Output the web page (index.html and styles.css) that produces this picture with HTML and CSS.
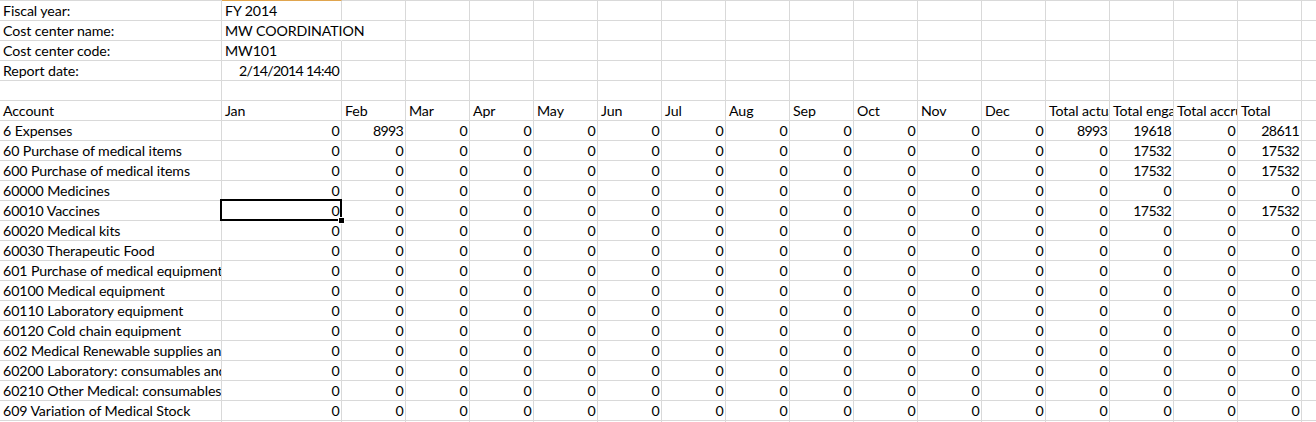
FILE: index.html
```html
<!DOCTYPE html>
<html>
<head>
<meta charset="utf-8">
<link rel="stylesheet" href="styles.css">
</head>
<body>
<div class="sheet">
  <div class="c t">Fiscal year:</div><div class="c t sc">FY 2014</div><div class="c t"></div><div class="c t"></div><div class="c t"></div><div class="c t"></div><div class="c t"></div><div class="c t"></div><div class="c t"></div><div class="c t"></div><div class="c t"></div><div class="c t"></div><div class="c t"></div><div class="c t"></div><div class="c t"></div><div class="c t"></div><div class="c t"></div><div class="c t"></div>
  <div class="c">Cost center name:</div><div class="c ov">MW COORDINATION</div><div class="c"></div><div class="c"></div><div class="c"></div><div class="c"></div><div class="c"></div><div class="c"></div><div class="c"></div><div class="c"></div><div class="c"></div><div class="c"></div><div class="c"></div><div class="c"></div><div class="c"></div><div class="c"></div><div class="c"></div><div class="c"></div>
  <div class="c">Cost center code:</div><div class="c">MW101</div><div class="c"></div><div class="c"></div><div class="c"></div><div class="c"></div><div class="c"></div><div class="c"></div><div class="c"></div><div class="c"></div><div class="c"></div><div class="c"></div><div class="c"></div><div class="c"></div><div class="c"></div><div class="c"></div><div class="c"></div><div class="c"></div>
  <div class="c">Report date:</div><div class="c n">2/14/2014 14:40</div><div class="c"></div><div class="c"></div><div class="c"></div><div class="c"></div><div class="c"></div><div class="c"></div><div class="c"></div><div class="c"></div><div class="c"></div><div class="c"></div><div class="c"></div><div class="c"></div><div class="c"></div><div class="c"></div><div class="c"></div><div class="c"></div>
  <div class="c"></div><div class="c"></div><div class="c"></div><div class="c"></div><div class="c"></div><div class="c"></div><div class="c"></div><div class="c"></div><div class="c"></div><div class="c"></div><div class="c"></div><div class="c"></div><div class="c"></div><div class="c"></div><div class="c"></div><div class="c"></div><div class="c"></div><div class="c"></div>
  <div class="c">Account</div><div class="c">Jan</div><div class="c">Feb</div><div class="c">Mar</div><div class="c">Apr</div><div class="c">May</div><div class="c">Jun</div><div class="c">Jul</div><div class="c">Aug</div><div class="c">Sep</div><div class="c">Oct</div><div class="c">Nov</div><div class="c">Dec</div><div class="c">Total actuals</div><div class="c">Total engaged</div><div class="c">Total accrued</div><div class="c">Total</div><div class="c"></div>
  <div class="c">6 Expenses</div><div class="c n">0</div><div class="c n">8993</div><div class="c n">0</div><div class="c n">0</div><div class="c n">0</div><div class="c n">0</div><div class="c n">0</div><div class="c n">0</div><div class="c n">0</div><div class="c n">0</div><div class="c n">0</div><div class="c n">0</div><div class="c n">8993</div><div class="c n">19618</div><div class="c n">0</div><div class="c n">28611</div><div class="c"></div>
  <div class="c">60 Purchase of medical items</div><div class="c n">0</div><div class="c n">0</div><div class="c n">0</div><div class="c n">0</div><div class="c n">0</div><div class="c n">0</div><div class="c n">0</div><div class="c n">0</div><div class="c n">0</div><div class="c n">0</div><div class="c n">0</div><div class="c n">0</div><div class="c n">0</div><div class="c n">17532</div><div class="c n">0</div><div class="c n">17532</div><div class="c"></div>
  <div class="c">600 Purchase of medical items</div><div class="c n">0</div><div class="c n">0</div><div class="c n">0</div><div class="c n">0</div><div class="c n">0</div><div class="c n">0</div><div class="c n">0</div><div class="c n">0</div><div class="c n">0</div><div class="c n">0</div><div class="c n">0</div><div class="c n">0</div><div class="c n">0</div><div class="c n">17532</div><div class="c n">0</div><div class="c n">17532</div><div class="c"></div>
  <div class="c">60000 Medicines</div><div class="c n">0</div><div class="c n">0</div><div class="c n">0</div><div class="c n">0</div><div class="c n">0</div><div class="c n">0</div><div class="c n">0</div><div class="c n">0</div><div class="c n">0</div><div class="c n">0</div><div class="c n">0</div><div class="c n">0</div><div class="c n">0</div><div class="c n">0</div><div class="c n">0</div><div class="c n">0</div><div class="c"></div>
  <div class="c">60010 Vaccines</div><div class="c n sel">0</div><div class="c n">0</div><div class="c n">0</div><div class="c n">0</div><div class="c n">0</div><div class="c n">0</div><div class="c n">0</div><div class="c n">0</div><div class="c n">0</div><div class="c n">0</div><div class="c n">0</div><div class="c n">0</div><div class="c n">0</div><div class="c n">17532</div><div class="c n">0</div><div class="c n">17532</div><div class="c"></div>
  <div class="c">60020 Medical kits</div><div class="c n">0</div><div class="c n">0</div><div class="c n">0</div><div class="c n">0</div><div class="c n">0</div><div class="c n">0</div><div class="c n">0</div><div class="c n">0</div><div class="c n">0</div><div class="c n">0</div><div class="c n">0</div><div class="c n">0</div><div class="c n">0</div><div class="c n">0</div><div class="c n">0</div><div class="c n">0</div><div class="c"></div>
  <div class="c">60030 Therapeutic Food</div><div class="c n">0</div><div class="c n">0</div><div class="c n">0</div><div class="c n">0</div><div class="c n">0</div><div class="c n">0</div><div class="c n">0</div><div class="c n">0</div><div class="c n">0</div><div class="c n">0</div><div class="c n">0</div><div class="c n">0</div><div class="c n">0</div><div class="c n">0</div><div class="c n">0</div><div class="c n">0</div><div class="c"></div>
  <div class="c">601 Purchase of medical equipment</div><div class="c n">0</div><div class="c n">0</div><div class="c n">0</div><div class="c n">0</div><div class="c n">0</div><div class="c n">0</div><div class="c n">0</div><div class="c n">0</div><div class="c n">0</div><div class="c n">0</div><div class="c n">0</div><div class="c n">0</div><div class="c n">0</div><div class="c n">0</div><div class="c n">0</div><div class="c n">0</div><div class="c"></div>
  <div class="c">60100 Medical equipment</div><div class="c n">0</div><div class="c n">0</div><div class="c n">0</div><div class="c n">0</div><div class="c n">0</div><div class="c n">0</div><div class="c n">0</div><div class="c n">0</div><div class="c n">0</div><div class="c n">0</div><div class="c n">0</div><div class="c n">0</div><div class="c n">0</div><div class="c n">0</div><div class="c n">0</div><div class="c n">0</div><div class="c"></div>
  <div class="c">60110 Laboratory equipment</div><div class="c n">0</div><div class="c n">0</div><div class="c n">0</div><div class="c n">0</div><div class="c n">0</div><div class="c n">0</div><div class="c n">0</div><div class="c n">0</div><div class="c n">0</div><div class="c n">0</div><div class="c n">0</div><div class="c n">0</div><div class="c n">0</div><div class="c n">0</div><div class="c n">0</div><div class="c n">0</div><div class="c"></div>
  <div class="c">60120 Cold chain equipment</div><div class="c n">0</div><div class="c n">0</div><div class="c n">0</div><div class="c n">0</div><div class="c n">0</div><div class="c n">0</div><div class="c n">0</div><div class="c n">0</div><div class="c n">0</div><div class="c n">0</div><div class="c n">0</div><div class="c n">0</div><div class="c n">0</div><div class="c n">0</div><div class="c n">0</div><div class="c n">0</div><div class="c"></div>
  <div class="c">602 Medical Renewable supplies and consumables</div><div class="c n">0</div><div class="c n">0</div><div class="c n">0</div><div class="c n">0</div><div class="c n">0</div><div class="c n">0</div><div class="c n">0</div><div class="c n">0</div><div class="c n">0</div><div class="c n">0</div><div class="c n">0</div><div class="c n">0</div><div class="c n">0</div><div class="c n">0</div><div class="c n">0</div><div class="c n">0</div><div class="c"></div>
  <div class="c">60200 Laboratory: consumables and reagents</div><div class="c n">0</div><div class="c n">0</div><div class="c n">0</div><div class="c n">0</div><div class="c n">0</div><div class="c n">0</div><div class="c n">0</div><div class="c n">0</div><div class="c n">0</div><div class="c n">0</div><div class="c n">0</div><div class="c n">0</div><div class="c n">0</div><div class="c n">0</div><div class="c n">0</div><div class="c n">0</div><div class="c"></div>
  <div class="c">60210 Other Medical: consumables and supplies</div><div class="c n">0</div><div class="c n">0</div><div class="c n">0</div><div class="c n">0</div><div class="c n">0</div><div class="c n">0</div><div class="c n">0</div><div class="c n">0</div><div class="c n">0</div><div class="c n">0</div><div class="c n">0</div><div class="c n">0</div><div class="c n">0</div><div class="c n">0</div><div class="c n">0</div><div class="c n">0</div><div class="c"></div>
  <div class="c">609 Variation of Medical Stock</div><div class="c n">0</div><div class="c n">0</div><div class="c n">0</div><div class="c n">0</div><div class="c n">0</div><div class="c n">0</div><div class="c n">0</div><div class="c n">0</div><div class="c n">0</div><div class="c n">0</div><div class="c n">0</div><div class="c n">0</div><div class="c n">0</div><div class="c n">0</div><div class="c n">0</div><div class="c n">0</div><div class="c"></div>
  <div class="c"></div><div class="c"></div><div class="c"></div><div class="c"></div><div class="c"></div><div class="c"></div><div class="c"></div><div class="c"></div><div class="c"></div><div class="c"></div><div class="c"></div><div class="c"></div><div class="c"></div><div class="c"></div><div class="c"></div><div class="c"></div><div class="c"></div><div class="c"></div>
</div>
</body>
</html>
```
FILE: styles.css
```css
html, body {
  margin: 0;
  padding: 0;
  background: #ffffff;
  overflow: hidden;
}
body {
  font-family: Lato, "Open Sans", sans-serif;
  font-size: 14.2px;
  color: #000000;
}
.sheet {
  display: grid;
  grid-template-columns: 222px 120px repeat(15, 64px) 64px;
  grid-template-rows: 21px;
  grid-auto-rows: 20px;
  width: max-content;
}
.c {
  box-sizing: border-box;
  border-right: 1px solid #d9d9d9;
  border-bottom: 1px solid #d9d9d9;
  padding: 1px 2px 0 3px;
  line-height: 18px;
  white-space: nowrap;
  overflow: hidden;
  letter-spacing: -0.1px;
}
.c.t {
  border-top: 1px solid #d9d9d9;
}
.c.sc {
  border-top-color: #e0a54e;
}
.c.n {
  text-align: right;
  padding-left: 2px;
  padding-right: 2px;
  letter-spacing: -0.7px;
}
.c.ov {
  overflow: visible;
  border-right-color: transparent;
}
.c.sel {
  position: relative;
  overflow: visible;
}
.c.sel::before {
  content: "";
  position: absolute;
  left: -2px;
  top: -2px;
  right: -1px;
  bottom: -1px;
  border: 2px solid #000000;
}
.c.sel::after {
  content: "";
  position: absolute;
  right: -4px;
  bottom: -4px;
  width: 5px;
  height: 5px;
  background: #000000;
  border: 1px solid #ffffff;
}
```
